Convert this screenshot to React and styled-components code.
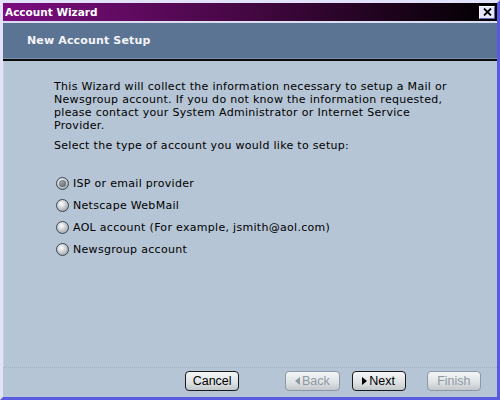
import styled, { createGlobalStyle } from "styled-components";

const GlobalStyle = createGlobalStyle`
  html, body {
    margin: 0;
    padding: 0;
    background: #b5c5d5;
  }
`;

const Window = styled.div`
  width: 500px;
  height: 400px;
  box-sizing: border-box;
  display: flex;
  flex-direction: column;
  border-top: 3px solid #e2e2fa;
  border-left: 3px solid #e2e2fa;
  border-right: 3px solid #5a5ae0;
  border-bottom: 3px solid #5a5ae0;
  background: #b5c5d5;
  font-family: "DejaVu Sans", Verdana, sans-serif;
`;

const TitleBar = styled.div`
  height: 18px;
  display: flex;
  align-items: center;
  justify-content: space-between;
  padding: 0 2px 0 2px;
  background: linear-gradient(to right, #7c0c80 0%, #4a0848 45%, #000000 100%);
  border-bottom: 2px solid #dcdcf0;
`;

const Title = styled.span`
  color: #ffffff;
  font-weight: bold;
  font-size: 10.5px;
`;

const CloseButton = styled.div`
  width: 16px;
  height: 13px;
  box-sizing: border-box;
  background: #e6e6fa;
  border-top: 1px solid #ffffff;
  border-left: 1px solid #ffffff;
  border-right: 1px solid #6060b0;
  border-bottom: 1px solid #6060b0;
  display: flex;
  align-items: center;
  justify-content: center;
`;

const Header = styled.div`
  height: 35px;
  display: flex;
  align-items: center;
  padding-left: 24px;
  background: #5c7493;
  border-bottom: 1px solid #7890ab;
  box-shadow: 0 2px 0 #0a0a0a;
  margin-bottom: 2px;
`;

const HeaderTitle = styled.span`
  color: #f4f4f8;
  font-weight: bold;
  font-size: 11px;
  letter-spacing: 0.15px;
`;

const Body = styled.div`
  flex: 1;
  display: flex;
  flex-direction: column;
  padding: 19px 20px 0 50px;
  border-left: 1px solid #c4d2e0;
  border-bottom: 1px dotted #a0b0c4;
`;

const Paragraph = styled.p`
  margin: 0;
  width: 400px;
  font-size: 11px;
  letter-spacing: 0.3px;
  line-height: 13px;
  color: #000000;
`;

const Prompt = styled(Paragraph)`
  margin-top: 7px;
`;

const Options = styled.div`
  display: flex;
  flex-direction: column;
  gap: 9px;
  margin-top: 25px;
  padding-left: 2px;
`;

const Option = styled.label`
  display: flex;
  align-items: center;
  gap: 4px;
  font-size: 11px;
  letter-spacing: 0.3px;
  line-height: 13px;
  color: #000;
`;

const Radio = styled.span`
  width: 13px;
  height: 13px;
  border-radius: 50%;
  box-sizing: border-box;
  border: 1px solid #3c4650;
  background: radial-gradient(circle at 40% 35%, #ffffff 0%, #d0d4d8 40%, #8a9096 100%);
  display: flex;
  align-items: center;
  justify-content: center;

  &::after {
    content: "";
    display: ${(p) => (p.$checked ? "block" : "none")};
    width: 7px;
    height: 7px;
    border-radius: 50%;
    background: radial-gradient(circle at 40% 35%, #9aa2aa 0%, #505860 100%);
  }
`;

const Footer = styled.div`
  display: flex;
  align-items: center;
  padding: 0 16px 3px 182px;
  height: 26px;
`;

const Button = styled.button`
  width: 55px;
  height: 20px;
  box-sizing: border-box;
  margin-left: ${(p) => p.$gap || 0}px;
  border-radius: 4px;
  border: 1px solid ${(p) => (p.disabled ? "#8c98a4" : "#1a1a1a")};
  background: linear-gradient(to bottom, #f4f6f6 0%, #dfe3e5 55%, #c2c8cc 100%);
  color: ${(p) => (p.disabled ? "#8e98a2" : "#000")};
  font-family: "Liberation Sans", Arial, sans-serif;
  font-size: 12.5px;
  padding: 0;
  display: flex;
  align-items: center;
  justify-content: center;
  gap: 2px;
`;

const Arrow = styled.span`
  width: 0;
  height: 0;
  border-top: 4px solid transparent;
  border-bottom: 4px solid transparent;
  ${(p) =>
    p.$left
      ? `border-right: 5px solid ${p.$color};`
      : `border-left: 5px solid ${p.$color};`}
`;

const options = [
  "ISP or email provider",
  "Netscape WebMail",
  "AOL account (For example, jsmith@aol.com)",
  "Newsgroup account",
];

export default function App() {
  return (
    <>
      <GlobalStyle />
      <Window>
        <TitleBar>
          <Title>Account Wizard</Title>
          <CloseButton>
            <svg width="9" height="8" viewBox="0 0 9 8">
              <path d="M1 0.5 L8 7.5 M8 0.5 L1 7.5" stroke="#000" strokeWidth="1.8" />
            </svg>
          </CloseButton>
        </TitleBar>
        <Header>
          <HeaderTitle>New Account Setup</HeaderTitle>
        </Header>
        <Body>
          <Paragraph>
            This Wizard will collect the information necessary to setup a Mail or
            Newsgroup account. If you do not know the information requested,
            please contact your System Administrator or Internet Service
            Provider.
          </Paragraph>
          <Prompt>Select the type of account you would like to setup:</Prompt>
          <Options>
            {options.map((o, i) => (
              <Option key={o}>
                <Radio $checked={i === 0} />
                {o}
              </Option>
            ))}
          </Options>
        </Body>
        <Footer>
          <Button>Cancel</Button>
          <Button disabled $gap={46}>
            <Arrow $left $color="#8e98a2" />
            Back
          </Button>
          <Button $gap={12}>
            <Arrow $color="#000" />
            Next
          </Button>
          <Button disabled $gap={21}>Finish</Button>
        </Footer>
      </Window>
    </>
  );
}
